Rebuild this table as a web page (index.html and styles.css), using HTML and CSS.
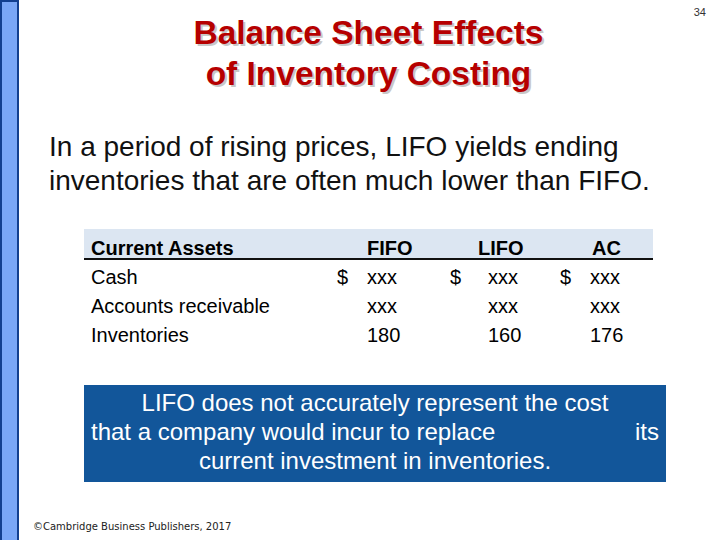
FILE: index.html
```html
<!DOCTYPE html>
<html>
<head>
<meta charset="utf-8">
<link rel="stylesheet" href="styles.css">
</head>
<body>
<div class="slide">
  <div class="side-bar"></div>
  <div class="main">
    <div class="page-num">34</div>
    <h1 class="title"><span>Balance Sheet Effects</span><span>of Inventory Costing</span></h1>
    <p class="lead">In a period of rising prices, LIFO yields ending inventories that are often much lower than FIFO.</p>
    <div class="table">
      <div class="row head">
        <div class="c-label">Current Assets</div>
        <div></div>
        <div class="c-v1">FIFO</div>
        <div></div>
        <div class="c-v2">LIFO</div>
        <div></div>
        <div class="c-v3">AC</div>
      </div>
      <div class="row">
        <div class="c-label">Cash</div>
        <div class="c-d">$</div>
        <div class="c-v1">xxx</div>
        <div class="c-d">$</div>
        <div class="c-v2 val">xxx</div>
        <div class="c-d">$</div>
        <div class="c-v3">xxx</div>
      </div>
      <div class="row">
        <div class="c-label">Accounts receivable</div>
        <div></div>
        <div class="c-v1">xxx</div>
        <div></div>
        <div class="c-v2 val">xxx</div>
        <div></div>
        <div class="c-v3">xxx</div>
      </div>
      <div class="row">
        <div class="c-label">Inventories</div>
        <div></div>
        <div class="c-v1">180</div>
        <div></div>
        <div class="c-v2 val">160</div>
        <div></div>
        <div class="c-v3">176</div>
      </div>
    </div>
    <div class="note">
      <span class="note-line">LIFO does not accurately represent the cost</span>
      <span class="note-line spread"><span>that a company would incur to replace</span><span>its</span></span>
      <span class="note-line">current investment in inventories.</span>
    </div>
    <div class="footer">©Cambridge Business Publishers, 2017</div>
  </div>
</div>
</body>
</html>
```

FILE: styles.css
```css
html, body {
  margin: 0;
  padding: 0;
  background: #fff;
}
.slide {
  width: 720px;
  height: 540px;
  display: flex;
  font-family: "Liberation Sans", Arial, sans-serif;
  color: #000;
  overflow: hidden;
}
.side-bar {
  width: 19px;
  flex: none;
  box-sizing: border-box;
  border: 2px solid #123f8f;
  border-bottom: none;
  background: #79a6f6;
}
.main {
  position: relative;
  flex: 1;
  display: flex;
  flex-direction: column;
}
.page-num {
  position: absolute;
  right: 14px;
  top: 6px;
  font-size: 11px;
  color: #333;
}
.title {
  margin: 12px 0 0 -19px;
  display: flex;
  flex-direction: column;
  align-items: center;
  box-sizing: border-box;
  width: 720px;
  padding-left: 38px;
  padding-right: 21px;
  font-size: 33.5px;
  line-height: 41px;
  font-weight: bold;
  color: #b60000;
  text-shadow: 2px 2px 0 #c8c8c8;
}
.lead {
  margin: 36px 0 0 30px;
  width: 640px;
  font-size: 28px;
  line-height: 34px;
  color: #111;
}
.table {
  margin: 31px 0 0 65px;
  width: 569px;
  font-size: 20px;
}
.row {
  display: grid;
  grid-template-columns: 253px 30px 83px 28px 82px 30px 63px;
  height: 29px;
  align-items: center;
}
.row.head {
  box-sizing: border-box;
  height: 31px;
  padding-top: 8px;
  background: #dce6f2;
  border-bottom: 2px solid #111;
  font-weight: bold;
  margin-bottom: 3px;
}
.c-label {
  padding-left: 7px;
}
.row.head .c-v3 {
  padding-left: 2px;
}
.val {
  padding-left: 10px;
}
.note {
  margin: 35px 0 0 65px;
  width: 582px;
  box-sizing: border-box;
  background: #12569a;
  color: #fff;
  padding: 3px 7px 7px;
  font-size: 24px;
  line-height: 29px;
  text-align: center;
}
.note-line {
  display: block;
}
.note-line.spread {
  display: flex;
  justify-content: space-between;
}
.footer {
  margin-top: auto;
  margin-left: 14px;
  margin-bottom: 8px;
  font-family: "DejaVu Sans", Verdana, sans-serif;
  font-size: 10px;
  color: #222;
}
```
